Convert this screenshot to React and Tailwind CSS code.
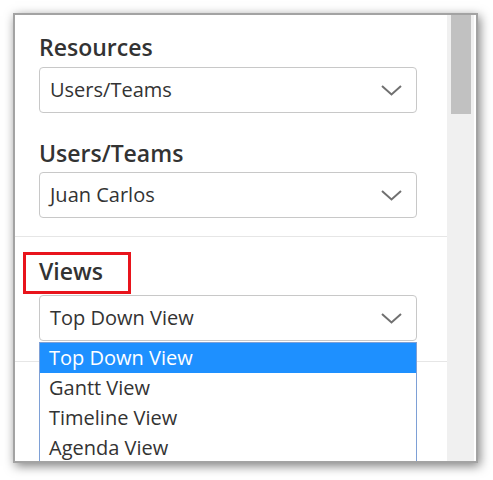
import React from 'react';

const font = { fontFamily: '"Open Sans", "Noto Sans", sans-serif' };

// chevron drawn by hand, lucide's is too tall for this one
const Chevron = () => (
  <svg width="21" height="11" viewBox="0 0 21 11" className="shrink-0">
    <polyline points="1,1 10.5,9.5 20,1" fill="none" stroke="#707070" strokeWidth="2" />
  </svg>
);

const SelectBox = ({ value }) => (
  <div className="flex items-center justify-between h-[46px] w-[378px] pl-[10px] pr-[14px] border border-[#c8c8c8] rounded-[4px] bg-white">
    <span className="text-[20px] text-[#333]">{value}</span>
    <Chevron />
  </div>
);

const views = ['Top Down View', 'Gantt View', 'Timeline View', 'Agenda View'];

export default function App() {
  return (
    <div className="w-[493px] h-[480px] bg-white pt-[13px] pl-[13px]" style={font}>
      <div className="w-[465px] h-[450px] border-[2px] border-[#a3a3a3] shadow-[2px_3px_10px_rgba(0,0,0,0.5)] bg-white flex overflow-hidden">
        {/* panel content */}
        <div className="w-[433px] relative">
          <div className="pl-[24px] pt-[17px] pb-[18px] border-b border-[#e6e6e6]">
            <div className="text-[23px] font-semibold text-[#333] leading-[30px]">Resources</div>
            <div className="mt-[5px]">
              <SelectBox value="Users/Teams" />
            </div>
            <div className="text-[23px] font-semibold text-[#333] leading-[30px] mt-[25px]">Users/Teams</div>
            <div className="mt-[4px]">
              <SelectBox value="Juan Carlos" />
            </div>
          </div>

          <div className="pl-[24px] pt-[19px] h-[125px] border-b border-[#e6e6e6]">
            <div className="relative">
              <div className="text-[23px] font-semibold text-[#333] leading-[30px]">Views</div>
              <div className="absolute left-[-16px] top-[-4px] w-[108px] h-[42px] border-[3px] border-[#e8141c]" />
            </div>
            <div className="mt-[9px] relative">
              <SelectBox value="Top Down View" />
              <div className="absolute left-0 top-[47px] w-[378px] border border-[#7ea0d6] bg-white">
                {views.map((v, i) => (
                  <div
                    key={v}
                    className={
                      i === 0
                        ? 'h-[30px] pl-[9px] flex items-center text-[20px] bg-[#1e90ff] text-white'
                        : 'h-[30px] pl-[9px] flex items-center text-[20px] text-[#333]'
                    }
                  >
                    {v}
                  </div>
                ))}
              </div>
            </div>
          </div>
        </div>

        {/* scrollbar */}
        <div className="w-[27px] bg-[#f0f0f0] pl-[4px] pr-[3px]">
          <div className="h-[99px] bg-[#c1c1c1]" />
        </div>
        <div className="w-[2px] bg-white" />
      </div>
    </div>
  );
}
